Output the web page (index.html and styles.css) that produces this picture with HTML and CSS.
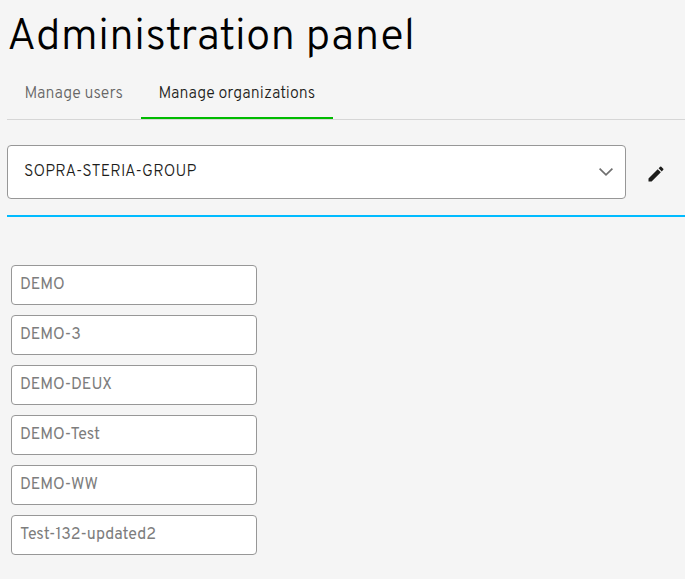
FILE: index.html
```
<!DOCTYPE html>
<html lang="en">
<head>
<meta charset="utf-8">
<title>Administration panel</title>
<link rel="stylesheet" href="styles.css">
</head>
<body>
<main class="panel">
  <h1 class="title">Administration panel</h1>
  <nav class="tabs">
    <a class="tab tab-users">Manage users</a>
    <a class="tab tab-orgs active">Manage organizations</a>
  </nav>
  <section class="picker">
    <div class="select">
      <span class="select-value">SOPRA-STERIA-GROUP</span>
      <svg class="chevron" width="14" height="8" viewBox="0 0 14 8"><path d="M.6.6 7 6.8 13.4.6" fill="none" stroke="#6f6f6f" stroke-width="1.7"/></svg>
    </div>
    <svg class="edit" width="20" height="20" viewBox="0 0 24 24"><path fill="#1d1d1b" d="M3 17.25V21h3.75L17.81 9.94l-3.75-3.75L3 17.25zM20.71 7.04a1 1 0 0 0 0-1.41l-2.34-2.34a1 1 0 0 0-1.41 0l-1.83 1.83 3.75 3.75 1.83-1.83z"/></svg>
  </section>
  <ul class="list">
    <li class="item">DEMO</li>
    <li class="item">DEMO-3</li>
    <li class="item">DEMO-DEUX</li>
    <li class="item">DEMO-Test</li>
    <li class="item">DEMO-WW</li>
    <li class="item">Test-132-updated2</li>
  </ul>
</main>
</body>
</html>
```
FILE: styles.css
```
* { box-sizing: border-box; }
body {
  margin: 0;
  background: #f5f5f5;
  font-family: Overpass, Roboto, sans-serif;
  font-size: 16px;
  color: #1d1d1b;
}
.panel { padding-left: 7px; height: 579px; overflow: hidden; }
.title {
  margin: 0;
  height: 67px;
  padding: 8px 0 0;
  font-size: 44px;
  line-height: 60px;
  font-weight: 300;
  letter-spacing: .18px;
  white-space: nowrap;
  color: #000;
}
.tabs {
  display: flex;
  height: 53px;
  border-bottom: 1px solid #d6d6d6;
}
.tab {
  padding: 15px 0 0 17.5px;
  line-height: 24px;
  font-weight: 300;
  letter-spacing: .05px;
  white-space: nowrap;
  border-bottom: 2px solid transparent;
}
.tab-users { width: 134px; color: #666; }
.tab-orgs { width: 192px; }
.active { border-bottom-color: #00bb00; }
.picker {
  display: flex;
  height: 97px;
  padding-top: 25px;
  border-bottom: 2px solid #00bbff;
}
.select {
  display: flex;
  justify-content: space-between;
  width: 619px;
  height: 54px;
  padding: 14px 12px 0 16px;
  border: 1px solid #979797;
  border-radius: 4px;
  background: #fff;
  line-height: 24px;
}
.select-value { font-weight: 300; letter-spacing: .13px; }
.chevron { margin-top: 8px; }
.edit { margin: 19px 0 0 20px; }
.list {
  display: grid;
  gap: 10px;
  margin: 48px 0 0 4px;
  padding: 0;
  list-style: none;
}
.item {
  width: 246px;
  height: 40px;
  padding: 7px 8px;
  border: 1px solid #979797;
  border-radius: 4px;
  background: #fff;
  color: #7d7d7d;
  line-height: 24px;
}
```
